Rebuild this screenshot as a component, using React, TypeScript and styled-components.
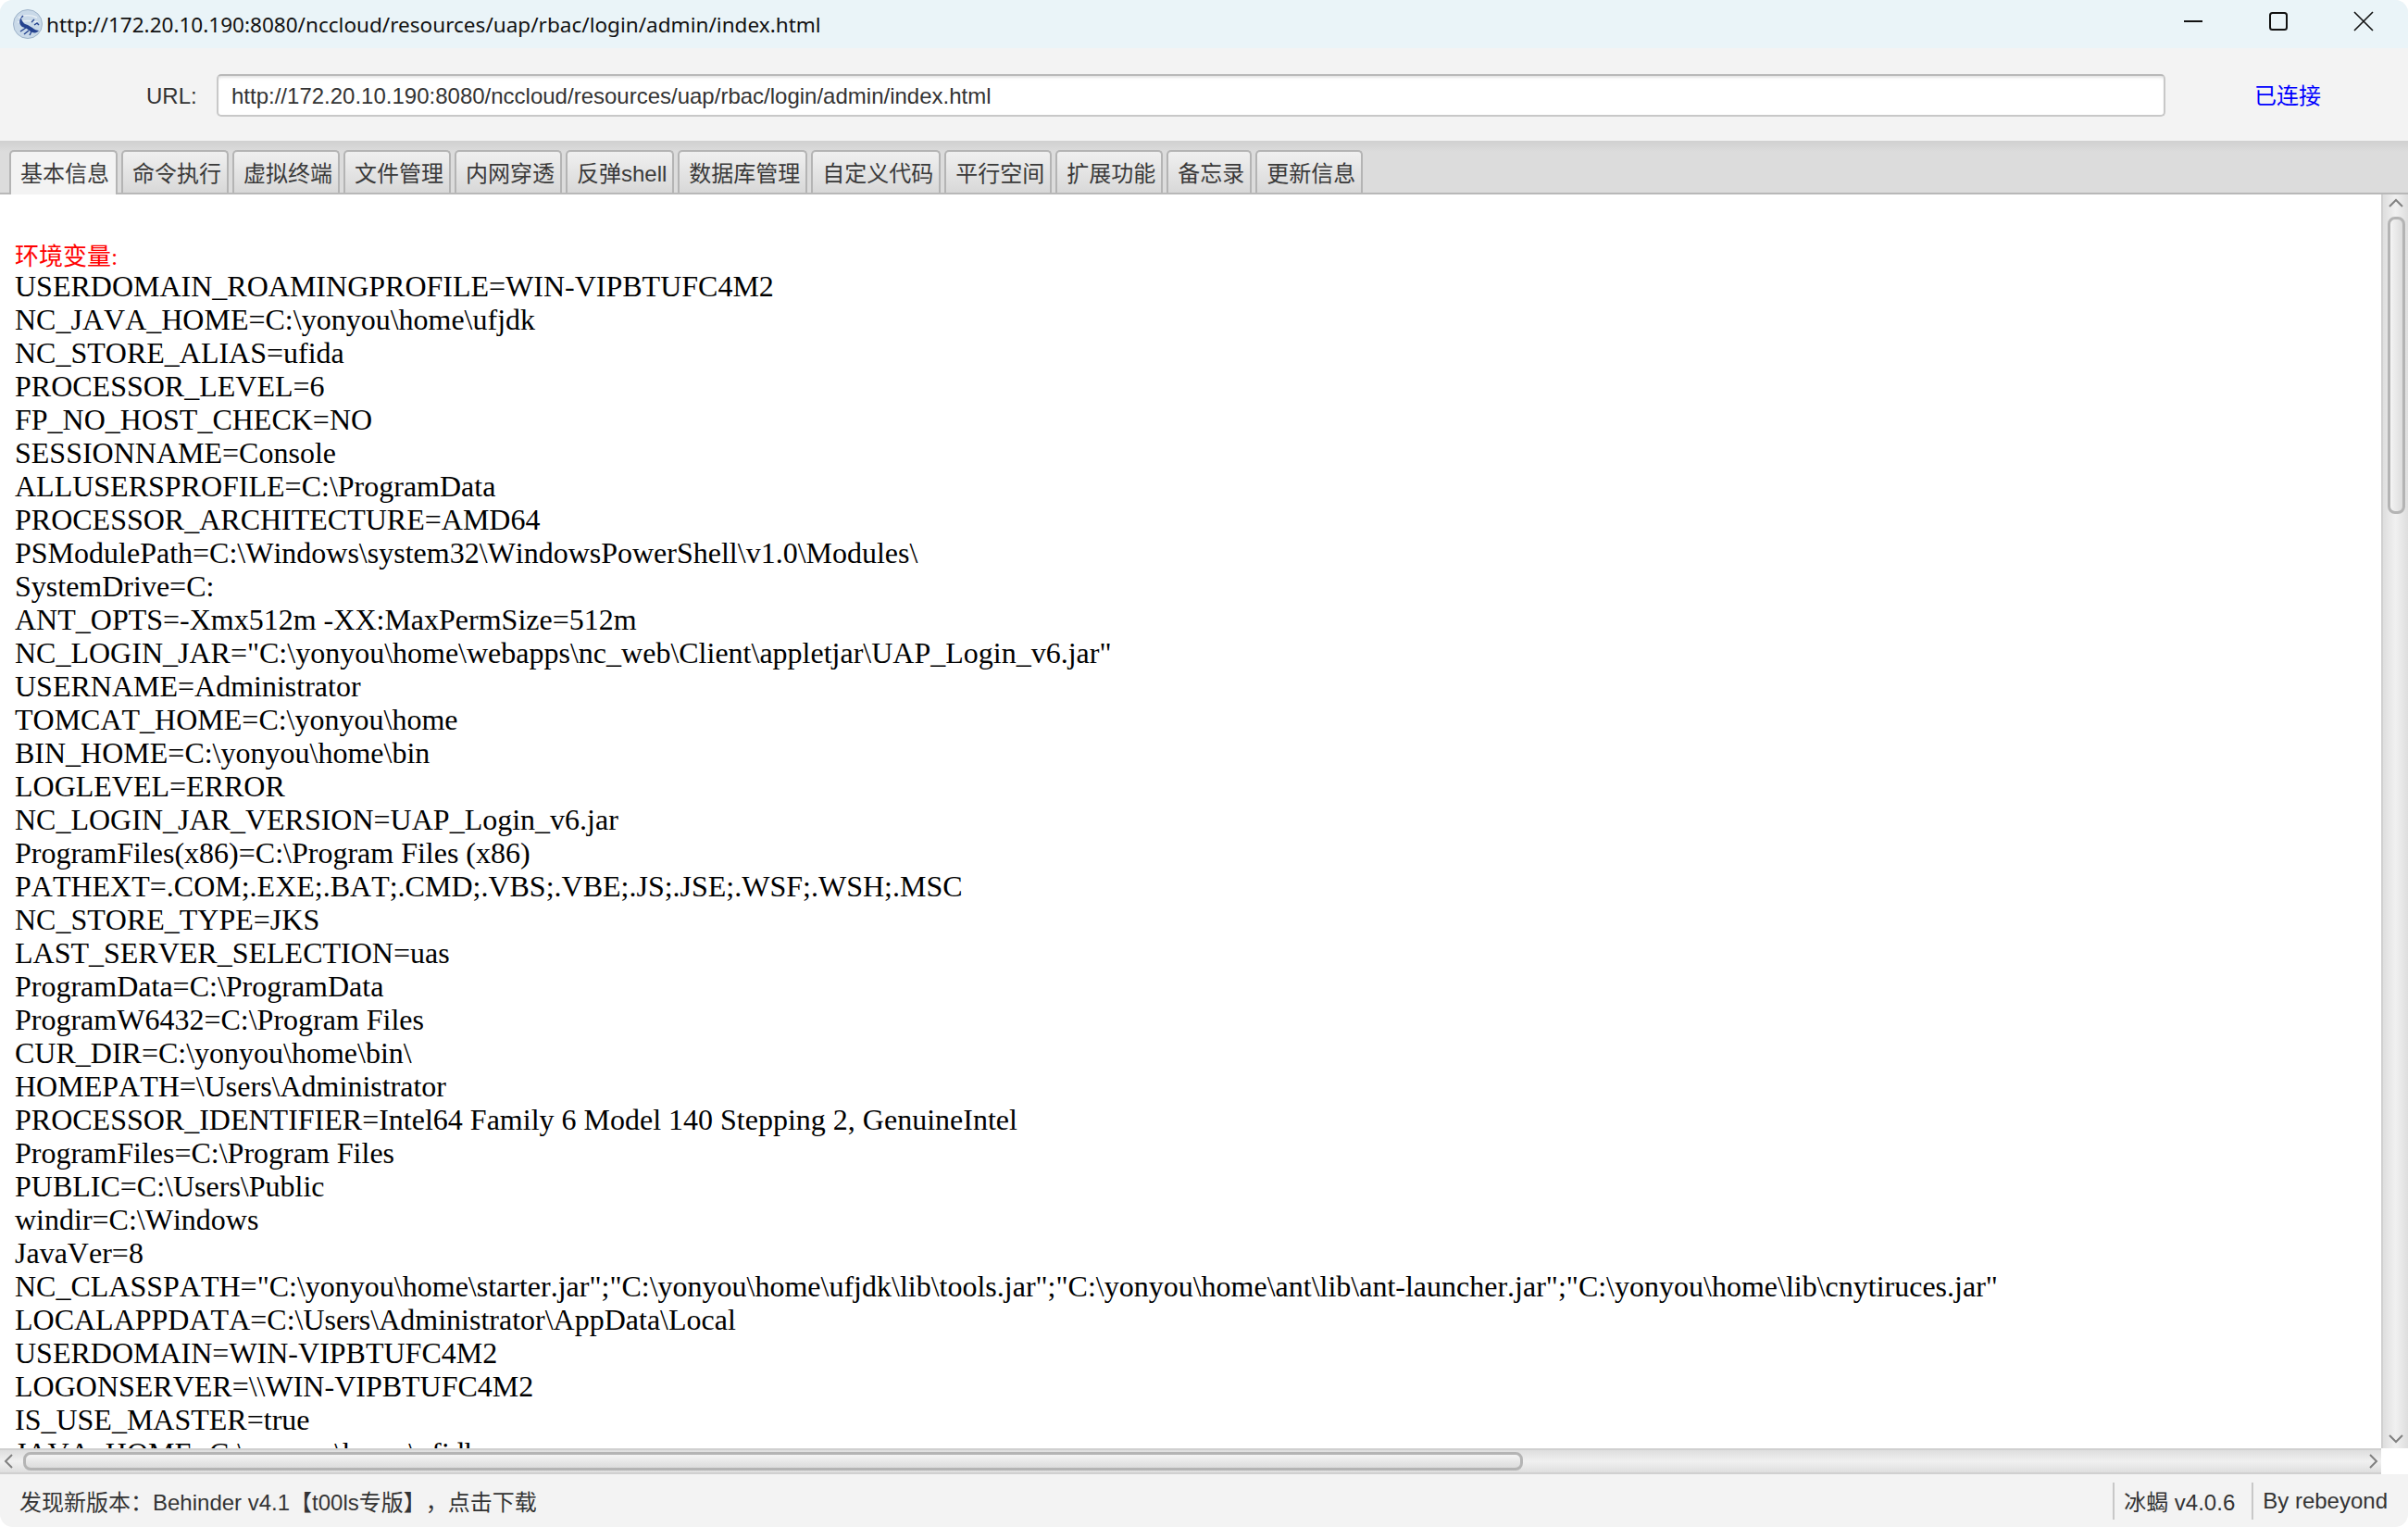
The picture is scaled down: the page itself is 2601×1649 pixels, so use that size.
import styled, { createGlobalStyle } from "styled-components";

const GlobalStyle = createGlobalStyle`
  html, body {
    margin: 0;
    padding: 0;
    background: #fff;
  }
  * {
    box-sizing: border-box;
  }
`;

const sans = `"Liberation Sans", "Noto Sans CJK SC", sans-serif`;
const serif = `"Liberation Serif", "Noto Sans CJK SC", serif`;

const Window = styled.div`
  width: 2601px;
  height: 1649px;
  display: flex;
  flex-direction: column;
  overflow: hidden;
  border-radius: 14px;
  background: #f3f3f3;
  font-family: ${sans};
  text-spacing-trim: space-all;
`;

const TitleBar = styled.div`
  height: 52px;
  flex: none;
  display: flex;
  align-items: center;
  padding: 0 2px 0 14px;
  background: #eaf4f8;
  color: #111;
  font: 22.55px "Noto Sans", sans-serif;
`;
const AppIcon = styled.svg`
  width: 32px;
  height: 32px;
  margin: 0 4px 0 0;
  flex: none;
`;
const TitleText = styled.span`
  flex: 1;
`;
const WinButton = styled.button`
  width: 92px;
  height: 46px;
  margin-bottom: 6px;
  padding: 0;
  border: 0;
  background: none;
  display: flex;
  align-items: center;
  justify-content: center;
  color: #111;
`;

const UrlBar = styled.div`
  height: 100px;
  flex: none;
  display: flex;
  align-items: center;
  padding: 2px 0 0 158px;
  color: #333;
  font-size: 24px;
`;
const UrlLabel = styled.label`
  width: 76px;
  padding-top: 2px;
`;
const UrlInput = styled.input`
  width: 2105px;
  height: 46px;
  padding: 2px 14px 0;
  border: 2px solid #c8c8c8;
  border-top-color: #b8b8b8;
  border-radius: 5px;
  background: #fff;
  box-shadow: inset 0 3px 3px -1px #e4e4e4;
  color: #333;
  font: 24px ${sans};
`;
const Status = styled.span`
  margin: 0 0 3px 96px;
  color: #00f;
`;

const TabBar = styled.div`
  height: 58px;
  flex: none;
  display: flex;
  align-items: flex-end;
  gap: 4px;
  padding-left: 10px;
  background: linear-gradient(#d0d0d0, #dcdcdc 12px);
  border-bottom: 2px solid #b8b8b8;
`;
const Tab = styled.div<{ $active?: boolean }>`
  height: ${(p) => (p.$active ? "48px" : "46px")};
  margin-bottom: ${(p) => (p.$active ? "-2px" : "0")};
  padding: ${(p) => (p.$active ? "0 7px 4px 10px" : "0 6px 2px 10px")};
  display: flex;
  align-items: center;
  border: 2px solid #b4b4b4;
  border-bottom: 0;
  border-radius: 5px 5px 0 0;
  background: ${(p) =>
    p.$active ? "#f3f3f3" : "linear-gradient(#f0f0f0, #d8d8d8)"};
  color: #3a3a3a;
  font-size: 24px;
  white-space: nowrap;
`;

const Middle = styled.div`
  flex: 1;
  min-height: 0;
  display: grid;
  grid-template-columns: 1fr 29px;
  grid-template-rows: 1fr 28px;
  background: #fff;
`;
const Output = styled.div`
  min-height: 0;
  overflow: hidden;
  padding: 52px 0 0 16px;
  background: #fff;
  color: #000;
  font: 32px/36px ${serif};
  font-kerning: none;
  white-space: pre;
`;
const Heading = styled.div`
  padding-top: 2px;
  color: #f00;
  font-size: 26px;
  line-height: 27px;
`;
const VScroll = styled.div`
  display: flex;
  flex-direction: column;
  align-items: center;
  padding: 1px 0 2px 1px;
  border-left: 2px solid #d0d0d0;
  background: linear-gradient(to right, #dedede, #f0f0f0 50%, #dedede);
`;
const HScroll = styled.div`
  display: flex;
  align-items: center;
  border-top: 2px solid #d0d0d0;
  border-bottom: 2px solid #d0d0d0;
  background: linear-gradient(#dedede, #f0f0f0 50%, #dedede);
`;
const Arrow = styled.svg`
  width: 18px;
  height: 18px;
  flex: none;
  color: #808080;
`;
const VThumb = styled.div`
  width: 19px;
  height: 321px;
  margin: 5px 0 auto;
  border: 3px solid #b4b4b4;
  border-radius: 8px;
  background: linear-gradient(to right, #f4f4f4, #dcdcdc);
`;
const HThumb = styled.div`
  width: 1620px;
  height: 20px;
  margin: 0 auto 0 7px;
  border: 3px solid #b4b4b4;
  border-radius: 8px;
  background: linear-gradient(#f4f4f4, #dcdcdc);
`;

const StatusBar = styled.div`
  height: 57px;
  flex: none;
  display: flex;
  align-items: center;
  padding: 0 22px 0 21px;
  color: #333;
  font-size: 24px;
`;
const Notice = styled.span`
  flex: 1;
`;
const Cell = styled.span`
  height: 40px;
  display: flex;
  align-items: center;
  margin-left: 18px;
  padding-left: 10px;
  border-left: 2px solid #c8c8c8;
`;

const tabs = [
  "基本信息",
  "命令执行",
  "虚拟终端",
  "文件管理",
  "内网穿透",
  "反弹shell",
  "数据库管理",
  "自定义代码",
  "平行空间",
  "扩展功能",
  "备忘录",
  "更新信息",
];

const envLines = [
  "USERDOMAIN_ROAMINGPROFILE=WIN-VIPBTUFC4M2",
  "NC_JAVA_HOME=C:\\yonyou\\home\\ufjdk",
  "NC_STORE_ALIAS=ufida",
  "PROCESSOR_LEVEL=6",
  "FP_NO_HOST_CHECK=NO",
  "SESSIONNAME=Console",
  "ALLUSERSPROFILE=C:\\ProgramData",
  "PROCESSOR_ARCHITECTURE=AMD64",
  "PSModulePath=C:\\Windows\\system32\\WindowsPowerShell\\v1.0\\Modules\\",
  "SystemDrive=C:",
  "ANT_OPTS=-Xmx512m -XX:MaxPermSize=512m",
  'NC_LOGIN_JAR="C:\\yonyou\\home\\webapps\\nc_web\\Client\\appletjar\\UAP_Login_v6.jar"',
  "USERNAME=Administrator",
  "TOMCAT_HOME=C:\\yonyou\\home",
  "BIN_HOME=C:\\yonyou\\home\\bin",
  "LOGLEVEL=ERROR",
  "NC_LOGIN_JAR_VERSION=UAP_Login_v6.jar",
  "ProgramFiles(x86)=C:\\Program Files (x86)",
  "PATHEXT=.COM;.EXE;.BAT;.CMD;.VBS;.VBE;.JS;.JSE;.WSF;.WSH;.MSC",
  "NC_STORE_TYPE=JKS",
  "LAST_SERVER_SELECTION=uas",
  "ProgramData=C:\\ProgramData",
  "ProgramW6432=C:\\Program Files",
  "CUR_DIR=C:\\yonyou\\home\\bin\\",
  "HOMEPATH=\\Users\\Administrator",
  "PROCESSOR_IDENTIFIER=Intel64 Family 6 Model 140 Stepping 2, GenuineIntel",
  "ProgramFiles=C:\\Program Files",
  "PUBLIC=C:\\Users\\Public",
  "windir=C:\\Windows",
  "JavaVer=8",
  'NC_CLASSPATH="C:\\yonyou\\home\\starter.jar";"C:\\yonyou\\home\\ufjdk\\lib\\tools.jar";"C:\\yonyou\\home\\ant\\lib\\ant-launcher.jar";"C:\\yonyou\\home\\lib\\cnytiruces.jar"',
  "LOCALAPPDATA=C:\\Users\\Administrator\\AppData\\Local",
  "USERDOMAIN=WIN-VIPBTUFC4M2",
  "LOGONSERVER=\\\\WIN-VIPBTUFC4M2",
  "IS_USE_MASTER=true",
  "JAVA_HOME=C:\\yonyou\\home\\ufjdk",
];

const url = "http://172.20.10.190:8080/nccloud/resources/uap/rbac/login/admin/index.html";

const App = () => {
  return (
    <Window>
      <GlobalStyle />
      <TitleBar>
        <AppIcon viewBox="0 0 32 32">
          <circle cx="16" cy="16" r="15.5" fill="#c9d9e8" stroke="#9db2c8" />
          <path d="M6 9c6-3 14-3 20 0M5 14c7-2 15-2 22 0" fill="none" stroke="#e8eff5" strokeWidth="1.5" />
          {/* scorpion */}
          <path
            d="M9 9c-3 3-2 8 1 10 2 1 4 1 5 2l4 3c3 2 7 2 9-1-2 0-5-1-7-3l-5-3c-2-1-4-1-5-3-1-1-2-3-2-5z"
            fill="#24428f"
          />
          <path
            d="M9 9l2-2M8 24l6-4M12 27l5-4M18 28l2-4M23 17l3-2 2 2M20 14l3-3"
            fill="none"
            stroke="#24428f"
            strokeWidth="1.4"
          />
        </AppIcon>
        <TitleText>{url}</TitleText>
        <WinButton>
          <svg width="22" height="22" viewBox="0 0 22 22">
            <path d="M1 11h20" stroke="currentColor" strokeWidth="2" />
          </svg>
        </WinButton>
        <WinButton>
          <svg width="22" height="22" viewBox="0 0 22 22">
            <rect x="2" y="2" width="18" height="18" rx="2.5" fill="none" stroke="currentColor" strokeWidth="2" />
          </svg>
        </WinButton>
        <WinButton>
          <svg width="22" height="22" viewBox="0 0 22 22">
            <path d="M1 1l20 20M21 1L1 21" stroke="currentColor" strokeWidth="1.6" />
          </svg>
        </WinButton>
      </TitleBar>

      <UrlBar>
        <UrlLabel>URL:</UrlLabel>
        <UrlInput readOnly value={url} />
        <Status>已连接</Status>
      </UrlBar>

      <TabBar>
        {tabs.map((tab, i) => (
          <Tab key={tab} $active={i === 0}>
            {tab}
          </Tab>
        ))}
      </TabBar>

      <Middle>
        <Output>
          <Heading>环境变量:</Heading>
          {envLines.map((line) => (
            <div key={line}>{line}</div>
          ))}
        </Output>
        <VScroll>
          <Arrow viewBox="0 0 18 18">
            <path d="M2 12l7-7 7 7" fill="none" stroke="currentColor" strokeWidth="2" />
          </Arrow>
          <VThumb />
          <Arrow viewBox="0 0 18 18">
            <path d="M2 6l7 7 7-7" fill="none" stroke="currentColor" strokeWidth="2" />
          </Arrow>
        </VScroll>
        <HScroll>
          <Arrow viewBox="0 0 18 18">
            <path d="M13 2L6 9l7 7" fill="none" stroke="currentColor" strokeWidth="2" />
          </Arrow>
          <HThumb />
          <Arrow viewBox="0 0 18 18">
            <path d="M6 2l7 7-7 7" fill="none" stroke="currentColor" strokeWidth="2" />
          </Arrow>
        </HScroll>
      </Middle>

      <StatusBar>
        <Notice>发现新版本：Behinder v4.1【t00ls专版】，点击下载</Notice>
        <Cell>冰蝎 v4.0.6</Cell>
        <Cell>By rebeyond</Cell>
      </StatusBar>
    </Window>
  );
};

export default App;
